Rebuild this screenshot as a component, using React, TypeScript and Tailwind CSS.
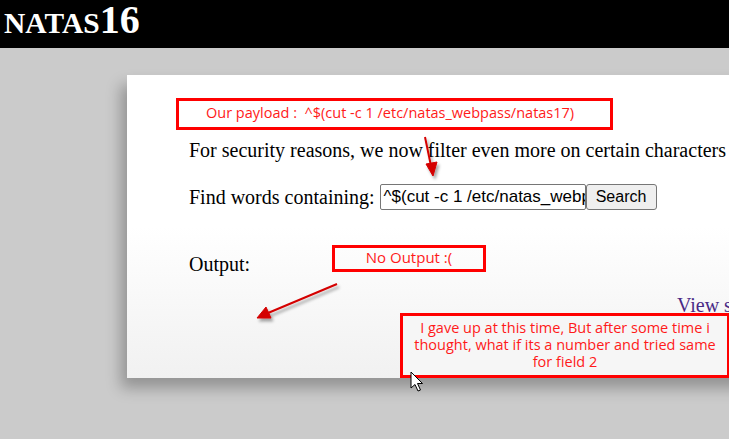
import React from "react";

export default function App() {
  const serif = { fontFamily: '"Liberation Serif", "Times New Roman", serif' };
  const sans = { fontFamily: '"Liberation Sans", Arial, sans-serif' };
  const note = { fontFamily: '"Open Sans", "Noto Sans", sans-serif' };
  return (
    <div className="relative w-[729px] h-[439px] overflow-hidden bg-[#cbcbcb]">
      <div className="h-[48px] bg-black pl-[4px] text-white font-bold leading-[39px] whitespace-nowrap" style={serif}>
        <span className="text-[29.5px]">NATAS</span>
        <span className="text-[40px]">16</span>
      </div>
      <div
        className="mt-[27px] ml-[127px] w-[900px] h-[303px] bg-gradient-to-b from-white via-white to-[#f1f1f1] shadow-[-6px_10px_14px_rgba(0,0,0,0.28)] pt-[64px] pl-[62px] text-[20px] leading-[23px] text-black"
        style={serif}
      >
        <div className="whitespace-nowrap">For security reasons, we now filter even more on certain characters</div>
        <div className="mt-[22px] flex items-center h-[26px] whitespace-nowrap">
          <span className="mr-[5px]">Find words containing:</span>
          <div
            className="w-[206px] h-[26px] border border-[#767676] rounded-[2px] bg-white pl-[3px] text-[17px] leading-[24px] overflow-hidden whitespace-nowrap"
            style={sans}
          >
            ^$(cut -c 1 /etc/natas_webpass/natas17)
          </div>
          <div
            className="w-[71px] h-[26px] border border-[#767676] rounded-[3px] bg-[#efefef] text-[16px] leading-[24px] text-center"
            style={sans}
          >
            Search
          </div>
        </div>
        <div className="mt-[43px]">Output:</div>
        <div className="mt-[18px] ml-[488px] text-[#4a2a86] whitespace-nowrap">View sourcecode</div>
      </div>

      {/* annotation boxes */}
      <div
        className="absolute left-[176px] top-[98px] w-[437px] h-[32px] border-[3px] border-[#ff0000] text-[#ff1a1a] text-[14.5px] leading-[24px] pl-[27px] whitespace-nowrap"
        style={note}
      >
        Our payload :&nbsp; ^$(cut -c 1 /etc/natas_webpass/natas17)
      </div>
      <div
        className="absolute left-[332px] top-[245px] w-[154px] h-[27px] border-[3px] border-[#ff0000] text-[#ff1a1a] text-[15px] leading-[19px] text-center whitespace-nowrap"
        style={note}
      >
        No Output :(
      </div>
      <div
        className="absolute left-[400px] top-[313px] w-[330px] h-[65px] border-[3px] border-[#ff0000] bg-[#f6f6f6] text-[#ff1a1a] text-[14.5px] leading-[17px] text-center pt-[3px]"
        style={note}
      >
        I gave up at this time, But after some time i<br />
        thought, what if its a number and tried same<br />
        for field 2
      </div>

      {/* arrows */}
      <svg className="absolute left-0 top-0" width="729" height="439" viewBox="0 0 729 439">
        <defs>
          <filter id="sh" x="-50%" y="-50%" width="200%" height="200%">
            <feDropShadow dx="2" dy="3" stdDeviation="1.5" floodColor="#000" floodOpacity="0.35" />
          </filter>
        </defs>
        <g filter="url(#sh)" fill="#d40000" stroke="#d40000">
          <line x1="425" y1="137" x2="431" y2="166" strokeWidth="2" />
          <polygon points="433,176 426,164 437,162" strokeWidth="1" />
          <line x1="337" y1="284" x2="268" y2="313" strokeWidth="2" />
          <polygon points="257,318 266,307 271,318" strokeWidth="1" />
        </g>
        {/* cursor */}
        <path
          d="M411 372 L411 388 L415 384.5 L418 391 L420.5 390 L417.5 383.5 L422.5 383.5 Z"
          fill="#fff"
          stroke="#000"
          strokeWidth="1"
          strokeLinejoin="round"
        />
      </svg>
    </div>
  );
}
